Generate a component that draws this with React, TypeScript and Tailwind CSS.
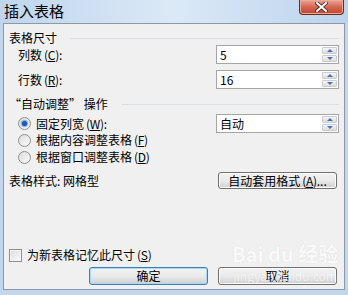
import type { ReactNode } from 'react';

const font = { fontFamily: '"Noto Sans CJK SC", "Noto Sans", sans-serif' };

const Key = ({ k }: { k: string }) => (
  <span className="ml-[2px] tracking-tight">
    (<span className="underline underline-offset-1">{k}</span>)
  </span>
);

const GroupHeader = ({ children }: { children: ReactNode }) => (
  <div className="flex h-[14px] items-center">
    <span className="shrink-0 leading-none">{children}</span>
    <div className="ml-[13px] h-px flex-1 bg-[#d5dfe5]" />
  </div>
);

const SpinButtons = () => (
  <div className="flex h-full w-[15px] flex-col gap-px py-px">
    <div className="flex flex-1 items-center justify-center rounded-[1px] border border-[#c9cdd3] bg-gradient-to-b from-[#f6f6f6] to-[#dcdcdc]">
      <div className="h-0 w-0 border-x-[3px] border-b-[3px] border-x-transparent border-b-[#4a6fb5]" />
    </div>
    <div className="flex flex-1 items-center justify-center rounded-[1px] border border-[#c9cdd3] bg-gradient-to-b from-[#f6f6f6] to-[#dcdcdc]">
      <div className="h-0 w-0 border-x-[3px] border-t-[3px] border-x-transparent border-t-[#4a6fb5]" />
    </div>
  </div>
);

const SpinBox = ({ value }: { value: string }) => (
  <div className="flex h-[19px] w-[123px] items-center border border-[#a5a5a5] bg-white pr-[1px]">
    <span className="flex-1 pl-[3px] text-[12px] leading-none">{value}</span>
    <SpinButtons />
  </div>
);

const Radio = ({ checked }: { checked?: boolean }) => (
  <div className="flex h-[13px] w-[13px] items-center justify-center rounded-full border border-[#8f8f8f] bg-gradient-to-br from-[#dcdcdc] to-[#fbfbfb]">
    {checked && <div className="h-[5px] w-[5px] rounded-full bg-[#1c5ab5] shadow-[0_0_1px_1px_#6fa4e4]" />}
  </div>
);

const Button = ({ children, focused, className }: { children: ReactNode; focused?: boolean; className?: string }) => (
  <div
    className={
      'flex items-center justify-center rounded-[3px] border bg-gradient-to-b from-[#f2f2f2] via-[#ebebeb] to-[#cfcfcf] text-[12px] leading-none ' +
      (focused ? 'border-[#3c7fb1] shadow-[inset_0_0_0_1px_#a6d8f7]' : 'border-[#707070] shadow-[inset_0_0_0_1px_#fcfcfc]') +
      ' ' +
      (className ?? '')
    }
  >
    {children}
  </div>
);

export default function App() {
  return (
    <div className="relative flex h-[295px] w-[348px] flex-col overflow-hidden bg-[#c2d7ed] text-[12px] text-black" style={font}>
      {/* title bar */}
      <div className="flex h-[23px] items-start bg-gradient-to-r from-[#c0d5ec] via-[#dbe9f7] to-[#bcd3ec]">
        <span className="ml-[4px] mt-[2px] text-[15px] leading-[18px]">插入表格</span>
        <div className="ml-auto mr-[4px] flex h-[15px] w-[45px] items-center justify-center rounded-b-[4px] border border-t-0 border-[#6b2a22] bg-gradient-to-b from-[#e8a796] via-[#d5664f] to-[#c4422c] shadow-[inset_0_0_0_1px_#eca898]">
          <svg width="13" height="10" viewBox="0 0 13 10" className="-mt-[1px]">
            <path d="M2 1 L11 9 M11 1 L2 9" stroke="#3b2a2a" strokeWidth="3.6" strokeLinecap="square" />
            <path d="M2 1 L11 9 M11 1 L2 9" stroke="#ffffff" strokeWidth="2" strokeLinecap="square" />
          </svg>
        </div>
      </div>

      {/* client area */}
      <div className="ml-[3px] flex h-[267px] w-[342px] flex-col border border-[#8a99aa] bg-[#f0f0f0] px-[5px] pt-[7px]">
        <GroupHeader>表格尺寸</GroupHeader>

        <div className="flex h-[19px] items-center">
          <span className="ml-[9px]">
            列数<Key k="C" />:
          </span>
          <div className="ml-auto">
            <SpinBox value="5" />
          </div>
        </div>
        <div className="mt-[6px] flex h-[19px] items-center">
          <span className="ml-[9px]">
            行数<Key k="R" />:
          </span>
          <div className="ml-auto">
            <SpinBox value="16" />
          </div>
        </div>

        <div className="mt-[8px]">
          <GroupHeader>“自动调整” 操作</GroupHeader>
        </div>

        <div className="mt-[3px] flex h-[19px] items-center">
          <div className="ml-[9px] flex items-center gap-[5px]">
            <Radio checked />
            <span>
              固定列宽<Key k="W" />:
            </span>
          </div>
          <div className="ml-auto">
            <SpinBox value="自动" />
          </div>
        </div>
        <div className="flex h-[14px] items-center">
          <div className="ml-[9px] flex items-center gap-[5px]">
            <Radio />
            <span>
              根据内容调整表格<Key k="F" />
            </span>
          </div>
        </div>
        <div className="mt-[3px] flex h-[14px] items-center">
          <div className="ml-[9px] flex items-center gap-[5px]">
            <Radio />
            <span>
              根据窗口调整表格<Key k="D" />
            </span>
          </div>
        </div>

        <div className="mt-[8px] flex h-[17px] items-center">
          <span>表格样式: 网格型</span>
          <Button className="ml-auto mr-[2px] h-[17px] w-[119px]">
            自动套用格式<Key k="A" />...
          </Button>
        </div>

        <div className="mt-[59px] flex h-[14px] items-center gap-[5px]">
          <div className="h-[13px] w-[13px] border border-[#8f8f8f] bg-gradient-to-br from-[#dcdcdc] to-[#fbfbfb] shadow-[inset_0_0_0_1px_#f4f4f4]" />
          <span>
            为新表格记忆此尺寸<Key k="S" />
          </span>
        </div>

        <div className="mt-[5px] flex h-[18px] items-center">
          <Button focused className="ml-[80px] h-[18px] w-[119px]">
            确定
          </Button>
          <Button className="ml-[10px] h-[18px] w-[119px]">取消</Button>
        </div>
      </div>

      {/* watermark */}
      <div className="pointer-events-none absolute left-[232px] top-[244px] flex flex-col items-center text-white opacity-60">
        <span className="text-[20px] font-bold leading-none [text-shadow:0_0_1px_#c8c8c8]">Bai du 经验</span>
        <span className="mt-[6px] text-[12px] leading-none [text-shadow:0_0_1px_#c8c8c8]">jingyan.baidu.com</span>
      </div>
    </div>
  );
}
